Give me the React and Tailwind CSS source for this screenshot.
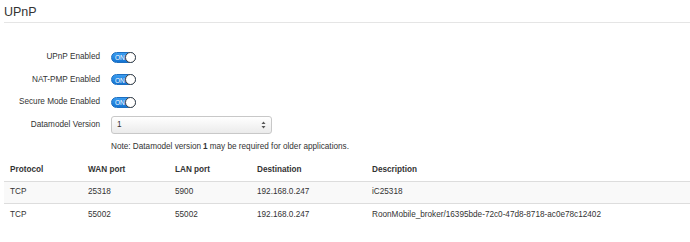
import React from "react";

const rows = [
  { proto: "TCP", wan: "25318", lan: "5900", dest: "192.168.0.247", desc: "iC25318" },
  {
    proto: "TCP",
    wan: "55002",
    lan: "55002",
    dest: "192.168.0.247",
    desc: "RoonMobile_broker/16395bde-72c0-47d8-8718-ac0e78c12402",
  },
];

function Toggle() {
  return (
    <div className="relative w-[25px] h-[11px] rounded-full bg-gradient-to-b from-[#3a9cf0] to-[#1474d2] border border-[#1d6fc0]">
      <span className="absolute left-[3px] top-[-0.5px] text-[6.5px] leading-[11px] text-white">ON</span>
      <span className="absolute right-[-1px] top-[-1px] w-[11px] h-[11px] rounded-full bg-white border border-[#444]" />
    </div>
  );
}

function FormRow({ label, children }) {
  return (
    <div className="flex items-center h-[22.5px]">
      <div className="w-[96px] text-right">{label}</div>
      <div className="ml-[11px] flex items-center">{children}</div>
    </div>
  );
}

export default function App() {
  return (
    <div
      className="bg-white w-[690px] h-[242px] overflow-hidden pl-[4px] text-[#333] text-[8.2px]"
      style={{ fontFamily: '"Liberation Sans", Arial, sans-serif' }}
    >
      <div className="h-[23px] border-b border-[#e5e5e5] text-[12.5px] leading-[22px] pt-[1px] text-[#333]">
        UPnP
      </div>

      <div className="mt-[23px]">
        <FormRow label="UPnP Enabled">
          <Toggle />
        </FormRow>
        <FormRow label="NAT-PMP Enabled">
          <Toggle />
        </FormRow>
        <FormRow label="Secure Mode Enabled">
          <Toggle />
        </FormRow>
        <FormRow label="Datamodel Version">
          <div className="relative w-[161px] h-[18px] rounded-[3px] border border-[#c8c8c8] bg-gradient-to-b from-white to-[#ebebeb] flex items-center pl-[5px]">
            <span>1</span>
            <svg className="absolute right-[5px] top-[4.5px]" width="5" height="8" viewBox="0 0 5 8">
              <path d="M2.5 0.5 L4.5 3 L0.5 3 Z" fill="#555" />
              <path d="M2.5 7.5 L4.5 5 L0.5 5 Z" fill="#555" />
            </svg>
          </div>
        </FormRow>
        <div className="h-[22.5px] flex items-center pl-[107px]">
          Note: Datamodel version <b className="font-semibold mx-[2px]">1</b> may be required for older applications.
        </div>
      </div>

      <table className="mt-[1px] w-[686px] border-collapse text-left">
        <thead>
          <tr className="h-[22px] border-b border-[#ddd]">
            <th className="w-[78px] pl-[6px] font-bold">Protocol</th>
            <th className="w-[87px] pl-[6px] font-bold">WAN port</th>
            <th className="w-[82px] pl-[6px] font-bold">LAN port</th>
            <th className="w-[115px] pl-[6px] font-bold">Destination</th>
            <th className="pl-[6px] font-bold">Description</th>
          </tr>
        </thead>
        <tbody>
          {rows.map((r, i) => (
            <tr
              key={i}
              className={`h-[22px] ${i === 0 ? "bg-[#f9f9f9] border-b border-[#ddd]" : ""}`}
            >
              <td className="pl-[6px]">{r.proto}</td>
              <td className="pl-[6px]">{r.wan}</td>
              <td className="pl-[6px]">{r.lan}</td>
              <td className="pl-[6px]">{r.dest}</td>
              <td className="pl-[6px]">{r.desc}</td>
            </tr>
          ))}
        </tbody>
      </table>
    </div>
  );
}
